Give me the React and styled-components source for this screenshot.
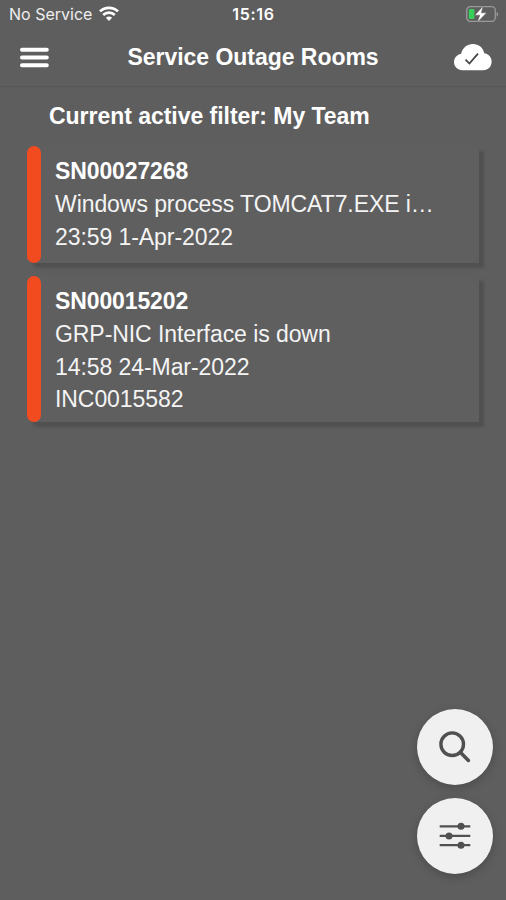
import React from 'react';
import styled, { createGlobalStyle } from 'styled-components';

const GlobalStyle = createGlobalStyle`
    * {
        box-sizing: border-box;
    }
    body {
        margin: 0;
        background-color: #5e5e5e;
        font-family: "Liberation Sans", Arial, sans-serif;
        color: #fff;
    }
`

const Screen = styled.div`
    display: flex;
    flex-direction: column;
    width: 506px;
    height: 900px;
    overflow: hidden;
    background-color: #5e5e5e;
`

const Status = {
    Bar: styled.div`
        display: grid;
        grid-template-columns: 1fr auto 1fr;
        align-items: center;
        height: 28px;
        padding: 0 7px 0 9px;
        font-family: Inter, sans-serif;
        font-size: 16px;
    `,
    Carrier: styled.div`
        display: flex;
        align-items: center;
        gap: 7px;
        color: #eee;
    `,
    Time: styled.time`
        padding-right: 1px;
        font-weight: 600;
        letter-spacing: 0.7px;
    `,
    Battery: styled.div`
        display: flex;
        justify-content: flex-end;
    `
}

const Header = {
    Bar: styled.header`
        display: flex;
        align-items: center;
        justify-content: space-between;
        height: 59px;
        padding: 0 14px 0 20px;
        border-bottom: 1px solid #555;
    `,
    Button: styled.button`
        display: flex;
        width: 38px;
        padding: 0;
        border: 0;
        background: none;
    `,
    Title: styled.h1`
        margin: 0;
        padding-right: 6px;
        font-size: 23px;
        font-weight: 700;
        letter-spacing: -0.03px;
        white-space: nowrap;
    `
}

const Filter = styled.h2`
    margin: 0;
    padding: 0 49px;
    height: 59px;
    line-height: 59px;
    font-size: 23px;
    font-weight: 700;
    letter-spacing: -0.03px;
`

const RoomList = styled.main`
    display: flex;
    flex-direction: column;
    gap: 13px;
    padding: 0 27px;
`

const Card = {
    Container: styled.article`
        display: flex;
        height: ${props => props.$height}px;
        border-radius: 7px 0 0 7px;
        box-shadow: 5px 5px 3px #505050;
        background-color: #5f5f5f;
    `,
    Stripe: styled.div`
        flex: none;
        width: 14px;
        border-radius: 7px;
        background-color: #f34b20;
    `,
    Body: styled.div`
        flex: 1;
        min-width: 0;
        padding: 9px 40px 0 14px;
        font-size: 23px;
        line-height: 32.8px;
        letter-spacing: -0.07px;
    `,
    Number: styled.div`
        font-weight: 700;
        letter-spacing: -0.12px;
    `,
    Line: styled.div`
        color: #f4f4f4;
        white-space: nowrap;
    `
}

const Actions = styled.div`
    position: absolute;
    top: 709px;
    left: 417px;
    display: flex;
    flex-direction: column;
    gap: 12.6px;
`

const RoundButton = styled.button`
    display: flex;
    align-items: center;
    justify-content: center;
    width: 76.4px;
    height: 76.4px;
    padding: 0;
    border: 0;
    border-radius: 50%;
    background-color: #f0f0f0;
    box-shadow: 0 3px 10px rgba(0,0,0,0.2);
`

const rooms = [
    {
        number: "SN00027268",
        lines: ["Windows process TOMCAT7.EXE i…", "23:59 1-Apr-2022"],
        height: 117
    },
    {
        number: "SN00015202",
        lines: ["GRP-NIC Interface is down", "14:58 24-Mar-2022", "INC0015582"],
        height: 146
    }
]

function WifiIcon() {
    return (
        <svg width="20" height="16" viewBox="0 0 20 16" fill="none" stroke="#fff" strokeWidth="2.7">
            <path d="M1 5.4a13 13 0 0 1 18 0" />
            <path d="M4.2 8.9a8.4 8.4 0 0 1 11.6 0" />
            <path d="M6.9 11.8a4.6 4.6 0 0 1 6.2 0L10 15z" fill="#fff" stroke="none" />
        </svg>
    )
}

function BatteryIcon() {
    return (
        <svg width="34" height="18" viewBox="0 0 34 18">
            <rect x="1.7" y="1.7" width="28.6" height="14.6" rx="3.5" fill="none" stroke="#9a9a9a" strokeWidth="1.3" />
            <path d="M31.6 6.7c2 .7 2 4.3 0 5z" fill="#9a9a9a" />
            <rect x="3.8" y="3.9" width="5.6" height="10.2" rx="1.2" fill="#35cf59" />
            <path d="M18.3.9 9.8 10.2h5l-2.6 7.3 9.4-9.7h-5.3z" fill="#fff" stroke="#5e5e5e" strokeWidth=".5" />
        </svg>
    )
}

function MenuIcon() {
    return (
        <svg width="29" height="21" viewBox="0 0 29 21" stroke="#fff" strokeWidth="4" strokeLinecap="round">
            <path d="M2 2.8h24.8M2 10.5h24.8M2 18.2h24.8" />
        </svg>
    )
}

function CloudIcon() {
    return (
        <svg width="39" height="28" viewBox="0 0 39 28">
            <path d="M8.6 27.5C3.6 27.5 0 24 0 19.2c0-4.4 3-7.7 7.3-8.6C9 4.4 13.5.7 19.4.7c6 0 10.5 3.8 11.7 9.4 4.4.7 7.5 4 7.5 8.4 0 5.1-3.5 9-8.5 9z" fill="#fff" />
            <path d="m11.8 16.8 4 3.9 8.8-10.2" fill="none" stroke="#444" strokeWidth="1.8" />
        </svg>
    )
}

function SearchIcon() {
    return (
        <svg width="32" height="32" viewBox="0 0 32 32" fill="none" stroke="#505050">
            <circle cx="13.2" cy="13.2" r="11.3" strokeWidth="3.4" />
            <path d="m21.3 21.3 8.1 8.1" strokeWidth="3.6" strokeLinecap="round" />
        </svg>
    )
}

function SlidersIcon() {
    return (
        <svg width="32" height="28" viewBox="0 0 32 28" fill="#505050">
            <path d="M.7 4.3h30.6M.7 13.9h30.6M.7 23.2h30.6" stroke="#505050" strokeWidth="2.2" />
            <circle cx="22" cy="4.3" r="3.5" />
            <circle cx="10" cy="13.9" r="3.5" />
            <circle cx="22" cy="23.2" r="3.5" />
        </svg>
    )
}

function Room(props) {
    return (
        <Card.Container $height={props.height}>
            <Card.Stripe />
            <Card.Body>
                <Card.Number>{props.number}</Card.Number>
                {props.lines.map(line => (
                    <Card.Line key={line}>{line}</Card.Line>
                ))}
            </Card.Body>
        </Card.Container>
    )
}

function App() {
    return (
        <Screen>
            <GlobalStyle />
            <Status.Bar>
                <Status.Carrier>
                    <span>No Service</span>
                    <WifiIcon />
                </Status.Carrier>
                <Status.Time>15:16</Status.Time>
                <Status.Battery>
                    <BatteryIcon />
                </Status.Battery>
            </Status.Bar>
            <Header.Bar>
                <Header.Button aria-label="Menu">
                    <MenuIcon />
                </Header.Button>
                <Header.Title>Service Outage Rooms</Header.Title>
                <Header.Button aria-label="Sync status">
                    <CloudIcon />
                </Header.Button>
            </Header.Bar>
            <Filter>Current active filter: My Team</Filter>
            <RoomList>
                {rooms.map(room => (
                    <Room key={room.number} {...room} />
                ))}
            </RoomList>
            <Actions>
                <RoundButton aria-label="Search">
                    <SearchIcon />
                </RoundButton>
                <RoundButton aria-label="Filters">
                    <SlidersIcon />
                </RoundButton>
            </Actions>
        </Screen>
    )
}

export default App;
